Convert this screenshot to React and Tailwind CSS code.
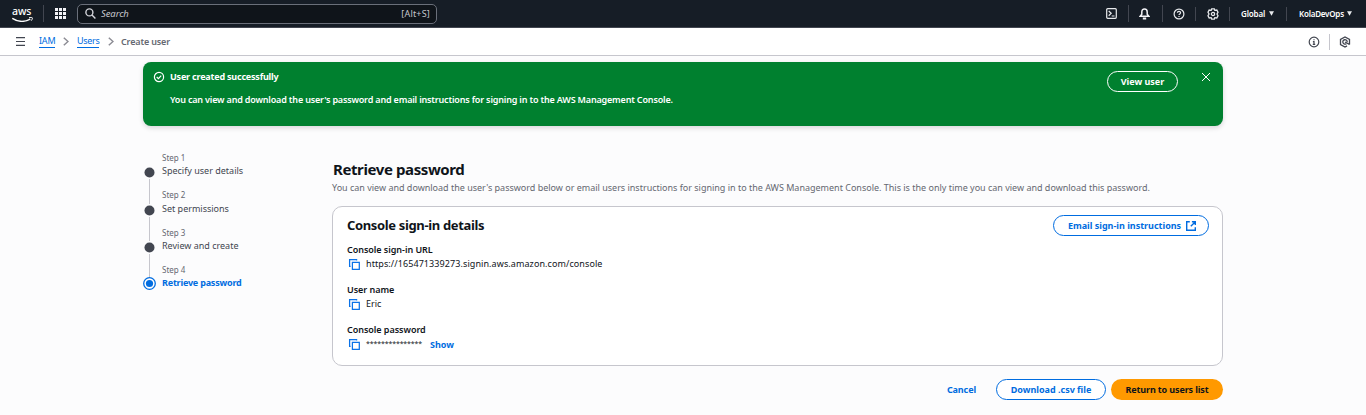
import React from "react";

const CaretDown = () => (
  <svg className="-mt-px h-[5px] w-[5px]" viewBox="0 0 5 5"><path d="M0 .3h5L2.5 4.7z" fill="#e8eaed" /></svg>
);

const CopyIcon = () => (
  <svg className="h-[12px] w-[12px] shrink-0" viewBox="0 0 12 12" fill="none" stroke="#0972e8" strokeWidth="1.25">
    <path d="M2.600 8.400h-1V1.600h7v1" />
    <path d="M4.400 4.400h6.900v6.900H4.400z" />
  </svg>
);

const Chevron = () => (
  <svg className="h-[9px] w-[6px]" viewBox="0 0 6 9" fill="none" stroke="#8c8c94" strokeWidth="1.5"><path d="M.8.7 5 4.5.8 8.3" /></svg>
);

const Bar = ({ className = "" }) => <div className={`w-px bg-[#424650] ${className}`} />;

function TopNav() {
  return (
    <header className="flex h-[28px] items-center border-b border-[#424650] bg-[#161d26] text-white">
      <div className="ml-[12px] flex h-[18px] w-[22px] flex-col">
        <span className="h-[13px] text-[10.5px] leading-[13px] font-medium tracking-[-0.1px]">aws</span>
        <svg className="-mt-px h-[5px] w-[22px]" viewBox="0 0 22 5" fill="none" stroke="#fff">
          <path d="M.3 1.300c5.500 3.600 12.500 3.800 18 .8" strokeWidth="1.3" />
          <path d="M17 .8c1.500-.4 3-.4 3.300 0 .3.500-.2 1.900-1.100 2.900" strokeWidth="1" />
        </svg>
      </div>
      <Bar className="ml-[9px] h-[17px]" />
      <svg className="ml-[11px] h-[11px] w-[11px]" viewBox="0 0 11 11" fill="#f3f3f7">
        {[0, 4, 8].map((y) => [0, 4, 8].map((x) => <rect key={`${x}-${y}`} x={x} y={y} width="3" height="3" />))}
      </svg>
      <div className="ml-[11px] flex h-[20px] w-[360px] items-center rounded-[5px] border border-[#6a6f7a] bg-[#0f141a] px-[6px] text-[#c6c6cd]">
        <svg className="ml-px h-[11px] w-[11px]" viewBox="0 0 11 11" fill="none" stroke="#d5d6dc" strokeWidth="1.4">
          <circle cx="4.4" cy="4.4" r="3.5" /><path d="m7 7 3.4 3.4" />
        </svg>
        <span className="ml-[5px] text-[9.5px] leading-[14px] italic tracking-[-0.1px]">Search</span>
        <span className="ml-auto text-[9px] leading-[14px] tracking-[0.2px]">[Alt+S]</span>
      </div>
      <div className="ml-auto flex items-center">
        <svg className="h-[11px] w-[11px]" viewBox="0 0 11 11" fill="none" stroke="#e8eaed" strokeWidth="1.2">
          <rect x=".7" y=".7" width="9.6" height="9.6" rx="1" /><path d="m2.700 3 2.500 2.300-2.500 2.400M5.700 8h2.800" />
        </svg>
        <Bar className="ml-[11px] h-[17px]" />
        <svg className="ml-[10px] h-[12px] w-[11px]" viewBox="0 0 11 12" fill="none" stroke="#f3f3f7" strokeWidth="1.5">
          <path d="M1.200 8.200h8.600L8.200 6.200V4c0-2-1-3-2.700-3S2.800 2 2.800 4v2.200z" /><path d="M3.800 10.500h3.400" strokeWidth="2" />
        </svg>
        <Bar className="ml-[12px] h-[17px]" />
        <svg className="ml-[10px] h-[12px] w-[12px]" viewBox="0 0 12 12" fill="none" stroke="#e8eaed" strokeWidth="1.2">
          <circle cx="6" cy="6" r="4.9" /><path d="M4.400 4.800c0-2 3.200-2 3.200 0C7.600 6 6 5.800 6 7.100M6 8v1" />
        </svg>
        <Bar className="ml-[10px] h-[14px]" />
        <svg className="ml-[11px] h-[12px] w-[12px]" viewBox="0 0 12 12" fill="none" stroke="#e8eaed" strokeWidth="1.3">
          <path d="M4.700.8h2.600l.5 1.500 2-.3L11 4.200 10 6l1 1.800L9.800 10l-2-.3-.5 1.500H4.700l-.5-1.500-2 .3L1 7.800 2 6 1 4.200 2.200 2l2 .3z" /><circle cx="6" cy="6" r="1.6" />
        </svg>
        <Bar className="ml-[10px] h-[14px]" />
        <div className="ml-[11px] flex w-[33px] items-center justify-between text-[8px] leading-[12px] font-semibold"><span className="tracking-[-0.15px]">Global</span><CaretDown /></div>
        <Bar className="ml-[12px] h-[14px]" />
        <div className="mr-[14px] ml-[12px] flex w-[53px] items-center justify-between text-[8px] leading-[12px] font-semibold"><span className="tracking-[-0.22px]">KolaDevOps</span><CaretDown /></div>
      </div>
    </header>
  );
}

function Breadcrumbs() {
  return (
    <nav className="flex h-[28px] items-center border-b border-[#c6c6cd] bg-white text-[9px] leading-[12px]">
      <svg className="ml-[16px] h-[9px] w-[9px]" viewBox="0 0 9 9" stroke="#424650" strokeWidth="1.2"><path d="M0 .6h9M0 4.500h9M0 8.400h9" /></svg>
      <a className="ml-[14px] w-[16px] border-b border-[#006ce0] tracking-[-0.2px] whitespace-nowrap text-[#006ce0]">IAM</a>
      <div className="ml-[8px]"><Chevron /></div>
      <a className="ml-[8px] w-[22px] border-b border-[#006ce0] tracking-[-0.3px] whitespace-nowrap text-[#006ce0]">Users</a>
      <div className="ml-[9px]"><Chevron /></div>
      <span className="ml-[7px] font-semibold tracking-[-0.15px] text-[#656871]">Create user</span>
      <svg className="ml-auto h-[12px] w-[12px]" viewBox="0 0 12 12" fill="none" stroke="#424650" strokeWidth="1.2">
        <circle cx="6" cy="6" r="4.8" /><path d="M6 3.200v1M4.900 5.600H6v2.700M4.800 8.400h2.400" />
      </svg>
      <div className="ml-[9px] h-[16px] w-px bg-[#c6c6cd]" />
      <svg className="mr-[15px] ml-[9px] h-[12px] w-[12px]" viewBox="0 0 12 12" fill="none" stroke="#424650" strokeWidth="1.3">
        <path d="M8 9.900 6 11 1.500 8.500v-5L6 1l4.500 2.500v4.900" /><path d="M7.300 7.700A2.200 2.200 0 1 1 8.200 6M6 6l4.500 2.400" />
      </svg>
    </nav>
  );
}

const steps = ["Specify user details", "Set permissions", "Review and create", "Retrieve password"];

function Steps() {
  return (
    <ol className="w-[190px] pt-[26px]">
      {steps.map((name, i) => {
        const active = i === 3;
        return (
          <li key={name} className="flex h-[37.4px]">
            <div className="flex w-[13px] flex-col items-center">
              <div className={i === 0 ? "h-[14.2px] w-px" : "h-[14.2px] w-px bg-[#c6c6cd]"} />
              {active ? (
                <svg className="-mt-px h-[13px] w-[13px] shrink-0" viewBox="0 0 13 13"><circle cx="6.5" cy="6.5" r="5.8" fill="#fff" stroke="#006ce0" strokeWidth="1.3" /><circle cx="6.5" cy="6.5" r="3.6" fill="#006ce0" /></svg>
              ) : (
                <svg className="my-px size-[11px] shrink-0" viewBox="0 0 11 11"><circle cx="5.5" cy="5.5" r="5" fill="#424650" /></svg>
              )}
              {!active && <div className="w-px grow bg-[#c6c6cd]" />}
            </div>
            <div className="ml-[6px] whitespace-nowrap">
              <div className="text-[8px] leading-[12.2px] text-[#656871]">Step {i + 1}</div>
              <div className={active ? "text-[9px] leading-[14px] font-bold tracking-[-0.2px] text-[#006ce0]" : "text-[9px] leading-[14px] text-[#424650]"}>{name}</div>
            </div>
          </li>
        );
      })}
    </ol>
  );
}

function Field({ label, children }) {
  return (
    <div className="h-[40px]">
      <div className="text-[9px] leading-[14px] font-semibold tracking-[-0.04px]">{label}</div>
      <div className="flex h-[14px] items-center pl-[1px]">
        <CopyIcon />
        {children}
      </div>
    </div>
  );
}

export default function App() {
  return (
    <div className="h-[415px] overflow-hidden bg-[#fcfcfd] font-['Noto_Sans',sans-serif] text-[#0f141a]">
      <TopNav />
      <Breadcrumbs />
      <main className="mx-auto w-[1080px] pt-[6px]">
        <section className="flex h-[64px] items-start rounded-[8px] bg-[#00802f] text-[9px] whitespace-nowrap text-white shadow-[0_2px_5px_rgba(0,7,22,0.15)]">
          <svg className="mt-[9px] ml-[10px] h-[12px] w-[12px]" viewBox="0 0 12 12" fill="none" stroke="#fff" strokeWidth="1.2"><circle cx="6" cy="6" r="4.6" /><path d="m3.700 6 1.700 1.600 2.800-3" /></svg>
          <div className="ml-[5px] pt-[8px]">
            <div className="leading-[14px] font-bold tracking-[-0.2px]">User created successfully</div>
            <div className="mt-[9px] leading-[14px] font-semibold tracking-[-0.175px]">You can view and download the user's password and email instructions for signing in to the AWS Management Console.</div>
          </div>
          <button className="mt-[9px] ml-auto h-[21px] w-[71px] rounded-full border border-white leading-[14px] font-bold">View user</button>
          <svg className="mt-[10px] mr-[12px] ml-[23px] h-[10px] w-[10px]" viewBox="0 0 10 10" stroke="#fff" strokeWidth="1"><path d="m1 1 8 8M9 1 1 9" /></svg>
        </section>
        <div className="flex">
          <Steps />
          <div className="w-[890px] whitespace-nowrap">
            <h1 className="mt-[33px] text-[15px] leading-[20px] font-bold tracking-[-0.4px]">Retrieve password</h1>
            <p className="mt-[2px] -ml-px text-[9px] leading-[14px] tracking-[-0.005px] text-[#656871]">You can view and download the user's password below or email users instructions for signing in to the AWS Management Console. This is the only time you can view and download this password.</p>
            <section className="mt-[11px] -ml-px h-[160px] w-[891px] rounded-[10px] border border-[#c6c6cd] bg-white px-[14px]">
              <div className="mt-[8px] flex h-[21px] items-center justify-between">
                <h2 className="-mt-[2px] text-[13px] leading-[18px] font-bold tracking-[-0.35px]">Console sign-in details</h2>
                <button className="-mr-px flex h-[21px] w-[156px] items-center justify-center gap-[5px] rounded-full border border-[#006ce0] pl-[2px] text-[9px] font-bold tracking-[-0.01px] text-[#006ce0]">
                  Email sign-in instructions
                  <svg className="h-[10px] w-[10px]" viewBox="0 0 10 10" fill="none" stroke="#006ce0" strokeWidth="1.4"><path d="M3.800.7H.7v8.600h8.600V6.200M5.900.7h3.400v3.400M9.100.9 4.800 5.200" /></svg>
                </button>
              </div>
              <div className="mt-[7px]">
                <Field label="Console sign-in URL"><span className="ml-[6px] text-[9px] tracking-[0.085px]">https://165471339273.signin.aws.amazon.com/console</span></Field>
                <Field label="User name"><span className="ml-[6px] text-[9px]">Eric</span></Field>
                <Field label="Console password">
                  <span className="ml-[6px] w-[64px] text-[7px] tracking-[-0.12px]">***************</span>
                  <a className="pt-px text-[9px] font-bold text-[#006ce0]">Show</a>
                </Field>
              </div>
            </section>
            <footer className="mt-[13px] flex items-center justify-end text-[9px] leading-[14px] font-bold text-[#006ce0]">
              <a className="mr-[20px] tracking-[-0.1px]">Cancel</a>
              <button className="mr-[5px] h-[21px] w-[110px] rounded-full border border-[#006ce0] bg-white">Download .csv file</button>
              <button className="h-[21px] w-[112px] rounded-full bg-[#ff9900] tracking-[-0.12px] text-[#0f141a]">Return to users list</button>
            </footer>
          </div>
        </div>
      </main>
    </div>
  );
}
